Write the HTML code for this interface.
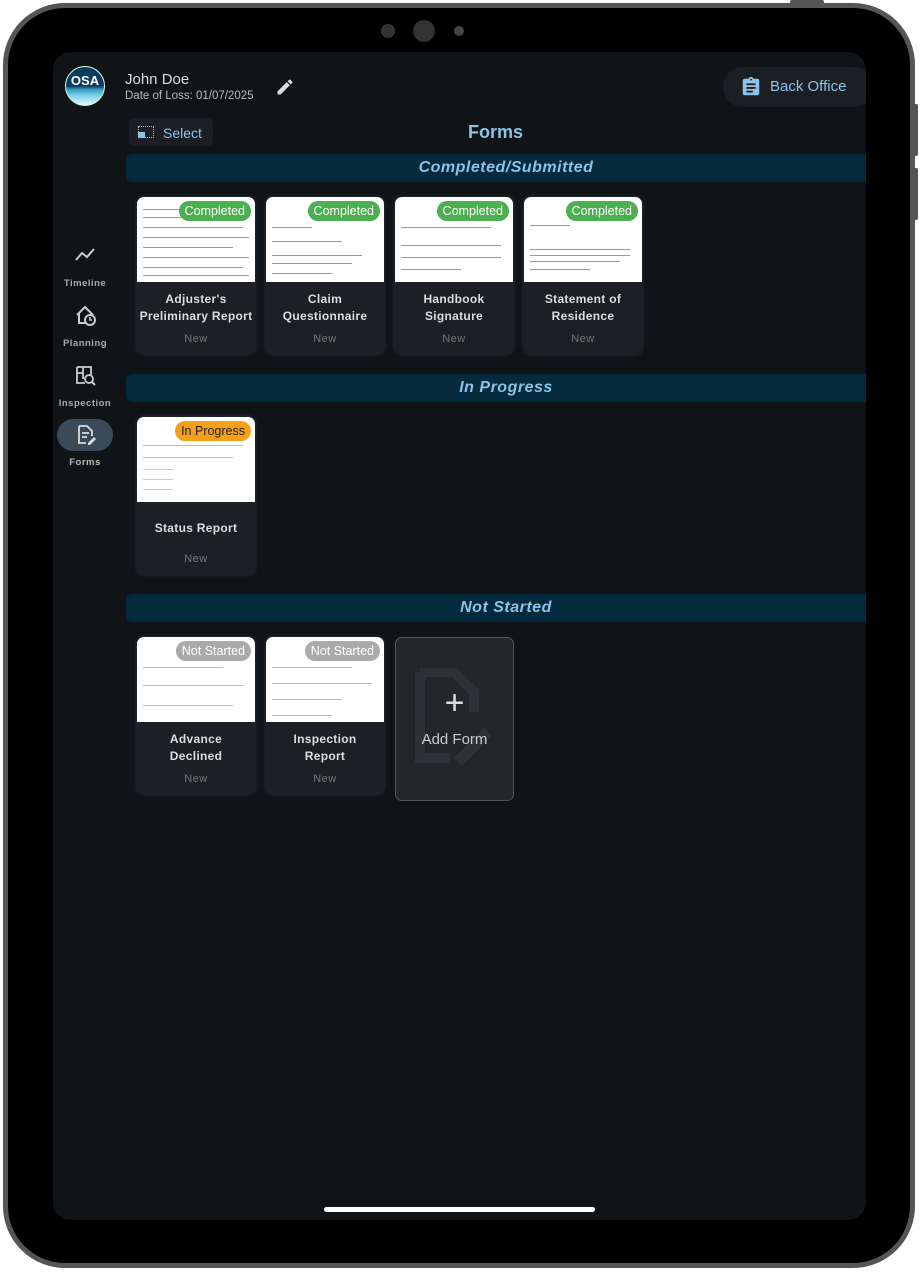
<!DOCTYPE html>
<html><head><style>
*{box-sizing:border-box;margin:0;padding:0}
body{width:920px;height:1272px;background:#fff;font-family:"Liberation Sans",sans-serif;position:relative;overflow:hidden}
.frame{position:absolute;left:3px;top:3px;width:912px;height:1265px;border-radius:62px;background:#000;border:5px solid #555}
.btn{position:absolute;background:#555;border-radius:2px}
.screen{position:absolute;left:53px;top:52px;width:813px;height:1168px;background:#111417;border-radius:18px;overflow:hidden}
.abs{position:absolute}
.bar{position:absolute;left:73px;width:760px;height:28px;background:#032a3d;border-radius:6px;color:#8cc3e6;font-weight:bold;font-style:italic;font-size:16px;text-align:center;line-height:28px;letter-spacing:.5px}
.card{position:absolute;width:118px;height:157px;background:#1c2024;border-radius:7px;box-shadow:0 0 4px #2a3a48;overflow:hidden}
.thumb{height:85px;background:#fff;position:relative;overflow:hidden}
.line{position:absolute;left:6px;height:1px;background:#999}
.badge{position:absolute;right:4px;top:4px;height:20px;border-radius:10px;font-size:12.5px;line-height:20px;padding:0 6px;color:#fff}
.title{color:#ddd;font-weight:bold;font-size:12px;text-align:center;line-height:17px;letter-spacing:.3px;height:38px;display:flex;align-items:center;justify-content:center;margin-top:7px;white-space:nowrap}
.new{color:#777;font-size:11px;text-align:center;margin-top:6px;letter-spacing:.5px}
.nav{position:absolute;left:0;width:64px;text-align:center;color:#aaa;font-size:9.5px;font-weight:bold;letter-spacing:.5px}
</style></head><body>
<div class="btn" style="left:790px;top:0;width:34px;height:4px"></div>
<div class="btn" style="left:913px;top:104px;width:5px;height:52px"></div>
<div class="btn" style="left:913px;top:168px;width:5px;height:52px"></div>
<div class="frame"></div>
<div class="abs" style="left:381px;top:24px;width:14px;height:14px;border-radius:50%;background:#333"></div>
<div class="abs" style="left:413px;top:20px;width:22px;height:22px;border-radius:50%;background:#333"></div>
<div class="abs" style="left:454px;top:26px;width:10px;height:10px;border-radius:50%;background:#444"></div>
<div class="screen">
 <div class="abs" style="left:12px;top:14px;width:40px;height:40px;border-radius:50%;background:linear-gradient(#0d3c5a 50%,#3aa0c8 60%,#7ad0e8 75%,#e8f6fa);border:1.5px solid #cfe;color:#fff;font-weight:bold;font-size:13px;text-align:center;line-height:28px">OSA</div>
 <div class="abs" style="left:72px;top:19px;color:#ddd;font-size:15px">John Doe</div>
 <div class="abs" style="left:72px;top:38px;color:#bbb;font-size:11.5px">Date of Loss: 01/07/2025</div>
 <svg class="abs" style="left:222px;top:25px" width="20" height="20" viewBox="0 0 24 24"><path fill="#ddd" d="M3 17.25V21h3.75L17.8 9.94l-3.75-3.75L3 17.25zM20.7 7.04a1 1 0 000-1.41l-2.34-2.34a1 1 0 00-1.41 0l-1.83 1.83 3.750 3.75 1.83-1.83z"/></svg>
 <div class="abs" style="left:670px;top:15px;width:150px;height:40px;border-radius:20px;background:#1b1f23"></div>
 <svg class="abs" style="left:687px;top:24px" width="22" height="22" viewBox="0 0 24 24"><path fill="#8cc3e6" d="M19 3h-4.2C14.4 1.8 13.3 1 12 1s-2.4.8-2.8 2H5c-1.1 0-2 .9-2 2v14c0 1.1.9 2 2 2h14c1.1 0 2-.9 2-2V5c0-1.1-.9-2-2-2zm-7 0c.55 0 1 .45 1 1s-.45 1-1 1-1-.45-1-1 .45-1 1-1zM7 8h10v2H7zm0 4h10v2H7zm0 4h7v2H7z"/></svg>
 <div class="abs" style="left:717px;top:26px;color:#8cc3e6;font-size:15px">Back Office</div>
 <div class="abs" style="left:76px;top:66px;width:84px;height:28px;border-radius:6px;background:#1b1f23"></div>
 <div class="abs" style="left:85px;top:74px;width:16px;height:12px;border:1.5px dotted #8cc3e6"></div>
 <div class="abs" style="left:85px;top:80px;width:7px;height:6px;background:#8cc3e6"></div>
 <div class="abs" style="left:110px;top:73px;color:#8cc3e6;font-size:14px">Select</div>
 <div class="abs" style="left:415px;top:70px;color:#8cc3e6;font-size:18px;font-weight:bold">Forms</div>

 <svg class="abs" style="left:21px;top:195px" width="22" height="16" viewBox="0 0 22 16"><path d="M2 13l6-7 5 4 7-8" stroke="#ccc" stroke-width="2" fill="none"/></svg>
 <div class="nav" style="top:226px">Timeline</div>
 <svg class="abs" style="left:21px;top:253px" width="24" height="22" viewBox="0 0 24 22"><path d="M3 10L11 2l8 8M5 8v10h6" stroke="#ccc" stroke-width="2" fill="none"/><circle cx="16" cy="15" r="5" stroke="#ccc" stroke-width="2" fill="none"/><path d="M16 12v3h2" stroke="#ccc" stroke-width="1.5" fill="none"/></svg>
 <div class="nav" style="top:286px">Planning</div>
 <svg class="abs" style="left:22px;top:313px" width="22" height="22" viewBox="0 0 22 22"><path d="M2 2h14v9M2 2v16h8M2 8h6v6M8 2v6" stroke="#ccc" stroke-width="1.8" fill="none"/><circle cx="14" cy="14" r="4" stroke="#ccc" stroke-width="1.8" fill="none"/><path d="M17 17l3 3" stroke="#ccc" stroke-width="2"/></svg>
 <div class="nav" style="top:346px">Inspection</div>
 <div class="abs" style="left:4px;top:367px;width:56px;height:32px;border-radius:16px;background:#3a4a58"></div>
 <svg class="abs" style="left:22px;top:372px" width="22" height="22" viewBox="0 0 22 22"><path d="M4 2h8l5 5v5M4 2v17h7M7 9h7M7 13h5" stroke="#ddd" stroke-width="1.8" fill="none"/><path d="M13 19l6-6 2 2-6 6h-2z" fill="#ddd"/></svg>
 <div class="nav" style="top:405px;color:#bbb">Forms</div>

 <div class="bar" style="top:102px">Completed/Submitted</div>
 <div class="bar" style="top:322px">In Progress</div>
 <div class="bar" style="top:542px">Not Started</div>

 <div class="card" style="left:84px;top:145px"><div class="thumb"><div class="line" style="top:12px;width:106px"></div><div class="line" style="top:20px;width:106px"></div><div class="line" style="top:30px;width:100px"></div><div class="line" style="top:40px;width:106px"></div><div class="line" style="top:50px;width:90px"></div><div class="line" style="top:60px;width:106px"></div><div class="line" style="top:70px;width:100px"></div><div class="line" style="top:78px;width:106px"></div><div class="badge" style="background:#4caf50">Completed</div></div><div class="title">Adjuster's<br>Preliminary Report</div><div class="new">New</div></div>
 <div class="card" style="left:213px;top:145px"><div class="thumb"><div class="line" style="top:30px;width:40px"></div><div class="line" style="top:44px;width:70px"></div><div class="line" style="top:58px;width:90px"></div><div class="line" style="top:66px;width:80px"></div><div class="line" style="top:76px;width:60px"></div><div class="badge" style="background:#4caf50">Completed</div></div><div class="title">Claim<br>Questionnaire</div><div class="new">New</div></div>
 <div class="card" style="left:342px;top:145px"><div class="thumb"><div class="line" style="top:30px;width:90px"></div><div class="line" style="top:48px;width:100px"></div><div class="line" style="top:60px;width:100px"></div><div class="line" style="top:72px;width:60px"></div><div class="badge" style="background:#4caf50">Completed</div></div><div class="title">Handbook<br>Signature</div><div class="new">New</div></div>
 <div class="card" style="left:471px;top:145px"><div class="thumb"><div class="line" style="top:28px;width:40px"></div><div class="line" style="top:52px;width:100px"></div><div class="line" style="top:58px;width:100px"></div><div class="line" style="top:64px;width:90px"></div><div class="line" style="top:72px;width:60px"></div><div class="badge" style="background:#4caf50">Completed</div></div><div class="title">Statement of<br>Residence</div><div class="new">New</div></div>

 <div class="card" style="left:84px;top:365px"><div class="thumb"><div class="line" style="top:28px;width:100px;background:#bbb"></div><div class="line" style="top:40px;width:90px;background:#bbb"></div><div class="line" style="top:52px;width:30px;background:#ccc"></div><div class="line" style="top:62px;width:30px;background:#ccc"></div><div class="line" style="top:72px;width:30px;background:#ccc"></div><div class="badge" style="background:#f5a017;color:#222">In Progress</div></div><div class="title">Status Report</div><div class="new">New</div></div>

 <div class="card" style="left:84px;top:585px"><div class="thumb"><div class="line" style="top:30px;width:80px;background:#bbb"></div><div class="line" style="top:48px;width:100px;background:#bbb"></div><div class="line" style="top:68px;width:90px;background:#bbb"></div><div class="badge" style="background:#aaa">Not Started</div></div><div class="title">Advance<br>Declined</div><div class="new">New</div></div>
 <div class="card" style="left:213px;top:585px"><div class="thumb"><div class="line" style="top:30px;width:80px;background:#bbb"></div><div class="line" style="top:46px;width:100px;background:#bbb"></div><div class="line" style="top:62px;width:70px;background:#bbb"></div><div class="line" style="top:78px;width:60px;background:#bbb"></div><div class="badge" style="background:#aaa">Not Started</div></div><div class="title">Inspection<br>Report</div><div class="new">New</div></div>

 <div class="abs" style="left:342px;top:585px;width:119px;height:164px;border-radius:7px;background:#24272a;border:1px solid #555;overflow:hidden">
  <svg class="abs" style="left:18px;top:30px" width="80" height="100" viewBox="0 0 80 100"><path d="M6 4h34l20 20v20M6 4v86h30" stroke="#2e3236" stroke-width="10" fill="none"/><path d="M40 90l30-30 8 8-30 30z" fill="#2e3236"/></svg>
  <div class="abs" style="left:0;width:117px;top:48px;text-align:center;color:#ddd;font-size:34px;line-height:34px">+</div>
  <div class="abs" style="left:0;width:117px;top:93px;text-align:center;color:#ccc;font-size:15px">Add Form</div>
 </div>
 <div class="abs" style="left:271px;top:1155px;width:271px;height:5px;border-radius:3px;background:#fff"></div>
</div>
</body></html>
